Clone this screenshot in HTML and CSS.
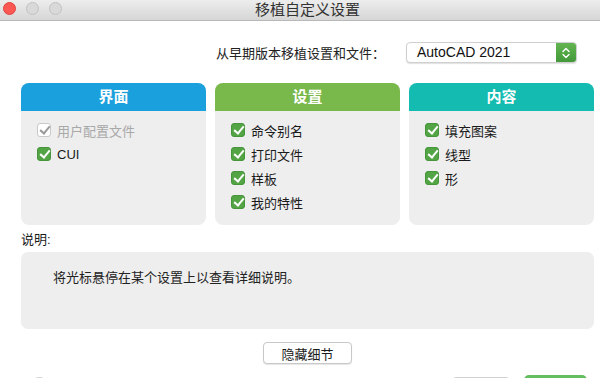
FILE: index.html
```html
<!DOCTYPE html>
<html lang="zh-CN">
  <head>
    <meta charset="UTF-8" />
    <meta name="viewport" content="width=device-width, initial-scale=1.0" />
    <title>移植自定义设置</title>
    <link rel="stylesheet" href="styles.css">
  </head>
  <body>
    <div class="titlebar">
      <div class="lights">
        <span class="light red"></span>
        <span class="light"></span>
        <span class="light"></span>
      </div>
      <div class="title">移植自定义设置</div>
    </div>

    <div class="content">
      <div class="source">
        <span class="source-label">从早期版本移植设置和文件：</span>
        <div class="select">
          <span class="select-value">AutoCAD 2021</span>
          <span class="stepper">
            <svg width="10" height="14" viewBox="0 0 10 14">
              <path d="M2 5.5 L5 2.5 L8 5.5 M2 8.5 L5 11.5 L8 8.5" fill="none" stroke="#fff" stroke-width="1.4" stroke-linecap="round" stroke-linejoin="round"/>
            </svg>
          </span>
        </div>
      </div>

      <div class="panels">
        <div class="panel">
          <div class="panel-head blue">界面</div>
          <ul class="panel-list">
            <li class="disabled"><span class="check"></span>用户配置文件</li>
            <li><span class="check on"></span>CUI</li>
          </ul>
        </div>
        <div class="panel">
          <div class="panel-head green">设置</div>
          <ul class="panel-list">
            <li><span class="check on"></span>命令别名</li>
            <li><span class="check on"></span>打印文件</li>
            <li><span class="check on"></span>样板</li>
            <li><span class="check on"></span>我的特性</li>
          </ul>
        </div>
        <div class="panel">
          <div class="panel-head teal">内容</div>
          <ul class="panel-list">
            <li><span class="check on"></span>填充图案</li>
            <li><span class="check on"></span>线型</li>
            <li><span class="check on"></span>形</li>
          </ul>
        </div>
      </div>

      <div class="desc-label">说明:</div>
      <div class="desc-box">将光标悬停在某个设置上以查看详细说明。</div>

      <div class="toggle-row">
        <button class="btn" type="button">隐藏细节</button>
      </div>

      <div class="footer">
        <span class="help"></span>
        <span class="spacer"></span>
        <span class="btn-cancel"></span>
        <span class="btn-ok"></span>
      </div>
    </div>
  </body>
</html>
```

FILE: styles.css
```css
* {
  box-sizing: border-box;
}
body {
  margin: 0;
  width: 600px;
  height: 378px;
  overflow: hidden;
  background: #ffffff;
  font-family: "Liberation Sans", "Noto Sans CJK SC", sans-serif;
  font-size: 13px;
  color: #222;
}
.titlebar {
  position: relative;
  height: 21px;
  background: linear-gradient(#ededed, #d6d6d6);
  border-bottom: 1px solid #b8b8b8;
}
.lights {
  display: flex;
  gap: 10px;
  padding: 2px 0 0 3px;
}
.light {
  width: 13px;
  height: 13px;
  border-radius: 50%;
  background: #d9d9d9;
  border: 1px solid #c2c2c2;
}
.light.red {
  background: #fc5753;
  border-color: #e0443e;
}
/* the window is a little wider than the shot, so the title sits right of centre */
.title {
  position: absolute;
  left: 0;
  right: -15px;
  top: 0;
  line-height: 20px;
  text-align: center;
  font-size: 15px;
  color: #333;
}
.content {
  padding: 0 6px 0 21px;
}
.source {
  display: flex;
  align-items: center;
  justify-content: flex-end;
  margin-top: 21px;
  padding-right: 17px;
  height: 21px;
}
.source-label {
  font-size: 13px;
  color: #222;
  margin-right: 21px;
}
.select {
  display: flex;
  width: 171px;
  height: 21px;
  border: 1px solid #cfcfcf;
  border-radius: 4px;
  background: #fff;
  box-shadow: 0 1px 1px rgba(0, 0, 0, 0.12);
  overflow: hidden;
}
.select-value {
  flex: 1;
  padding-left: 10px;
  line-height: 19px;
  font-size: 14px;
  color: #111;
}
.stepper {
  width: 20px;
  background: linear-gradient(#62b550, #43993a);
  display: flex;
  align-items: center;
  justify-content: center;
}
.panels {
  display: grid;
  grid-template-columns: repeat(3, 185px);
  gap: 9px;
  margin-top: 20px;
}
.panel {
  height: 142px;
  background: #eeeeee;
  border-radius: 8px;
  overflow: hidden;
}
.panel-head {
  height: 28px;
  line-height: 28px;
  text-align: center;
  color: #fff;
  font-size: 15px;
  font-weight: bold;
}
.blue {
  background: #1aa0dc;
}
.green {
  background: #79b84a;
}
.teal {
  background: #14bbb0;
}
.panel-list {
  list-style: none;
  margin: 0;
  padding: 7px 0 0 16px;
}
.panel-list li {
  display: flex;
  align-items: center;
  height: 24px;
  font-size: 13px;
  color: #1a1a1a;
}
.panel-list li.disabled {
  color: #a8a8a8;
}
.check {
  position: relative;
  width: 14px;
  height: 14px;
  margin-right: 6px;
  border-radius: 3px;
  background: #fff;
  border: 1px solid #c9c9c9;
}
.check::after {
  content: "";
  position: absolute;
  left: 4px;
  top: 0;
  width: 4px;
  height: 8px;
  border: solid #9a9a9a;
  border-width: 0 2px 2px 0;
  transform: rotate(40deg);
}
.check.on {
  background: #52a444;
  border-color: #46953a;
}
.check.on::after {
  border-color: #fff;
}
.desc-label {
  margin-top: 6px;
  line-height: 18px;
  font-size: 13px;
  color: #1a1a1a;
}
.desc-box {
  margin-top: 3px;
  height: 77px;
  background: #eeeeee;
  border-radius: 7px;
  padding: 17px 0 0 32px;
  font-size: 13px;
  line-height: 18px;
  color: #222;
}
.toggle-row {
  display: flex;
  justify-content: center;
  margin-top: 13px;
}
.btn {
  width: 89px;
  height: 22px;
  background: #fff;
  border: 1px solid #c8c8c8;
  border-radius: 4px;
  box-shadow: 0 1px 1px rgba(0, 0, 0, 0.1);
  font-family: "Liberation Sans", "Noto Sans CJK SC", sans-serif;
  font-size: 13px;
  color: #1a1a1a;
  padding: 0;
}
.footer {
  display: flex;
  align-items: flex-start;
  margin-top: 11px;
}
.help {
  width: 17px;
  height: 17px;
  margin-left: 10px;
  margin-top: 2px;
  border-radius: 50%;
  border: 1px solid #c9c9c9;
  background: #fff;
}
.spacer {
  flex: 1;
}
.btn-cancel {
  width: 58px;
  height: 20px;
  margin-top: 2px;
  border: 1px solid #d0d0d0;
  border-radius: 4px;
  background: #fff;
}
.btn-ok {
  width: 63px;
  height: 20px;
  margin-left: 14px;
  margin-right: 7px;
  border-radius: 5px;
  background: #64bd5e;
}
```
